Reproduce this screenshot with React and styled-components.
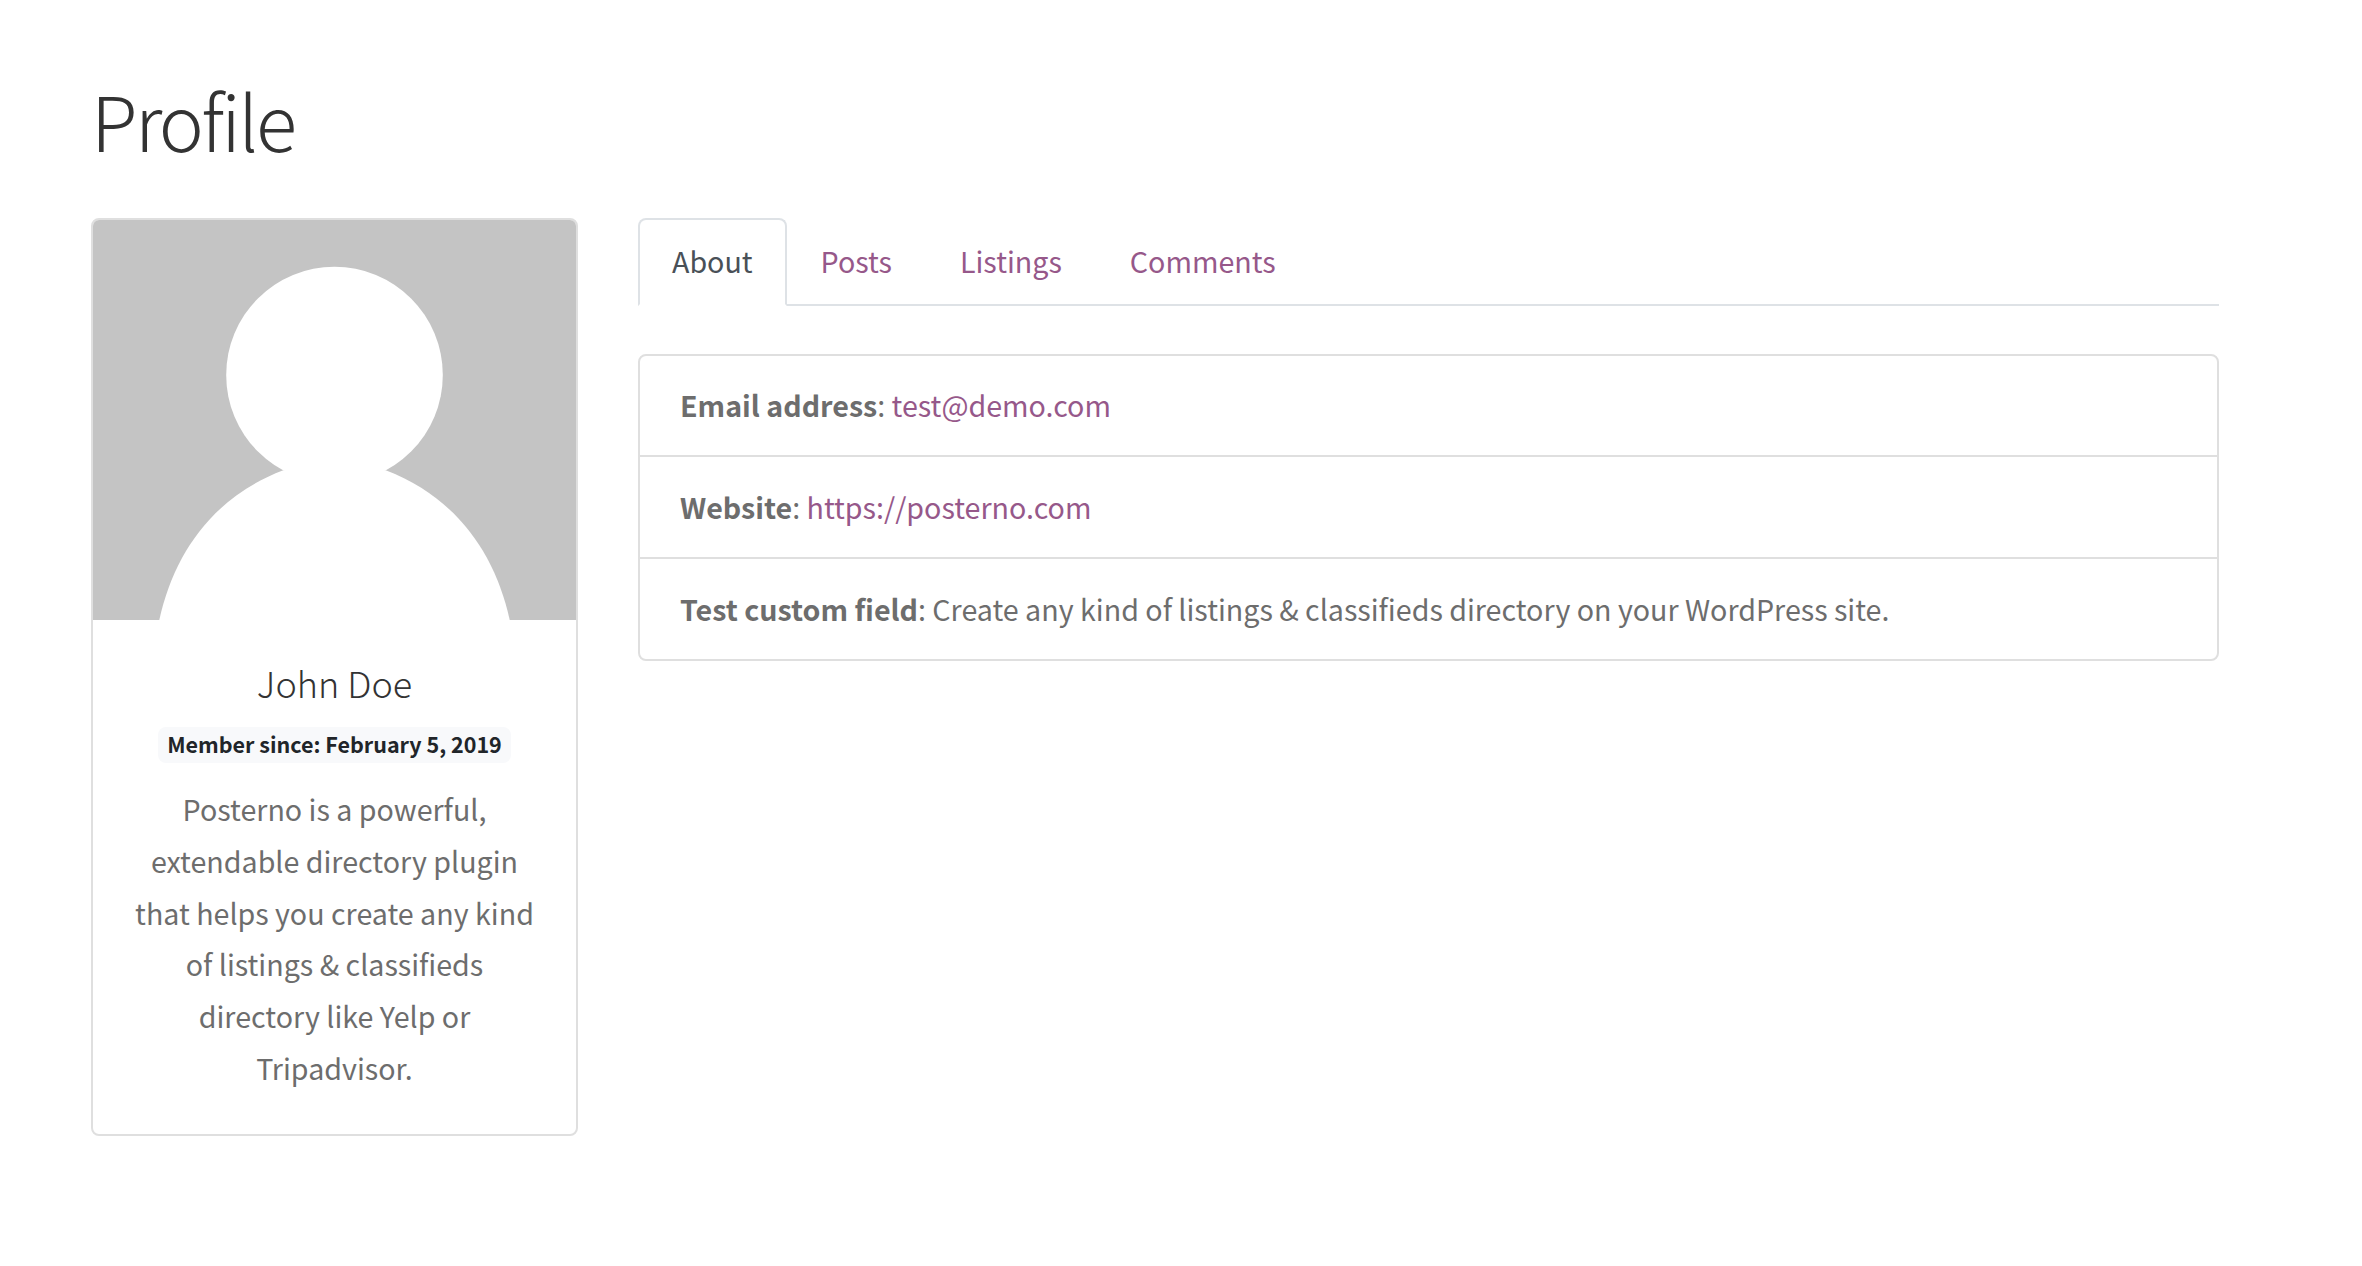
import React from "react";
import styled, { createGlobalStyle } from "styled-components";

const GlobalStyle = createGlobalStyle`
  *, *::before, *::after { box-sizing: border-box; }
  body {
    margin: 0;
    background: #fff;
    color: #6d6d6d;
    font-family: "Noto Sans CJK SC", "Noto Sans", sans-serif;
    font-size: 28.64px;
    line-height: 51.75px;
  }
`;

const Page = styled.main`
  min-height: 1266px;
  padding: 69px 143px 0 91px;
`;

const Title = styled.h1`
  margin: 0 0 49px;
  color: #333;
  font-size: 76px;
  font-weight: 300;
  line-height: 100px;
  letter-spacing: -2.6px;
`;

const Columns = styled.div`
  display: grid;
  grid-template-columns: 487px 1fr;
  column-gap: 60px;
  align-items: start;
`;

const Card = styled.aside`
  height: 918px;
  border: 2px solid #dfdfdf;
  border-radius: 8px;
  overflow: hidden;
  text-align: center;
`;

const Avatar = styled.svg`
  display: block;
  width: 483px;
  height: 400px;
`;

const CardBody = styled.div`
  display: flex;
  flex-direction: column;
  align-items: center;
  padding-top: 37px;
`;

const Name = styled.h4`
  margin: 0;
  color: #333;
  font-size: 36px;
  font-weight: 300;
  line-height: 50px;
`;

const Badge = styled.span`
  margin-top: 20px;
  height: 36px;
  padding: 0 9px;
  border-radius: 8px;
  background: #f8f9fb;
  color: #212529;
  font-size: 21.5px;
  font-weight: 700;
  line-height: 34px;
  white-space: nowrap;
`;

const Bio = styled.p`
  margin: 20px 0 0;
`;

const Line = styled.span`
  display: block;
  white-space: nowrap;
`;

const Tabs = styled.nav`
  display: flex;
  height: 88px;
  border-bottom: 2px solid #dee2e6;
`;

const Tab = styled.a`
  height: 88px;
  padding: 15px 32px 0;
  border: 2px solid transparent;
  border-radius: 8px 8px 0 0;
  color: ${(p) => (p.$active ? "#495057" : "#96588a")};
  ${(p) =>
    p.$active &&
    `
    border-color: #dee2e6 #dee2e6 #fff;
    background: #fff;
  `}
`;

const List = styled.ul`
  margin: 48px 0 0;
  padding: 0;
  list-style: none;
  border: 2px solid #dfdfdf;
  border-radius: 8px;
`;

const Row = styled.li`
  height: 99px;
  padding: 23px 40px 0;
  white-space: nowrap;
  & + & {
    height: 102px;
    padding-top: 23.5px;
    border-top: 2px solid #dfdfdf;
  }
`;

const Label = styled.strong`
  font-weight: 700;
`;

const Link = styled.a`
  color: #96588a;
`;

const bio = [
  "Posterno is a powerful,",
  "extendable directory plugin",
  "that helps you create any kind",
  "of listings & classifieds",
  "directory like Yelp or",
  "Tripadvisor.",
];

export default function App() {
  return (
    <>
      <GlobalStyle />
      <Page>
        <Title>Profile</Title>
        <Columns>
          <Card>
            <Avatar viewBox="0 0 483 400">
              <rect width="483" height="400" fill="#c4c4c4" />
              <circle cx="241.5" cy="155" r="108.3" fill="#fff" />
              <path
                d="M66.3 400C81 333 120.3 276.9 190.3 250.3H292.7C362.7 276.9 402 333 416.7 400Z"
                fill="#fff"
              />
            </Avatar>
            <CardBody>
              <Name>John Doe</Name>
              <Badge>Member since: February 5, 2019</Badge>
              <Bio>
                {bio.map((line) => (
                  <Line key={line}>{line}</Line>
                ))}
              </Bio>
            </CardBody>
          </Card>
          <section>
            <Tabs>
              <Tab $active>About</Tab>
              <Tab>Posts</Tab>
              <Tab>Listings</Tab>
              <Tab>Comments</Tab>
            </Tabs>
            <List>
              <Row>
                <Label>Email address</Label>: <Link>test@demo.com</Link>
              </Row>
              <Row>
                <Label>Website</Label>: <Link>https://posterno.com</Link>
              </Row>
              <Row>
                <Label>Test custom field</Label>: Create any kind of listings &amp; classifieds
                directory on your WordPress site.
              </Row>
            </List>
          </section>
        </Columns>
      </Page>
    </>
  );
}
